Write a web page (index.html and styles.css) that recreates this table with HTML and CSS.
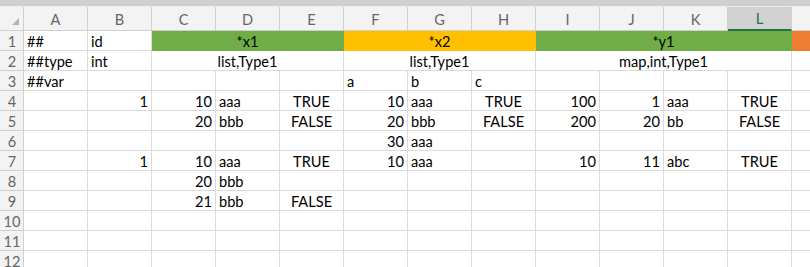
FILE: index.html
```html
<!DOCTYPE html>
<html lang="en">
<head>
    <meta charset="UTF-8">
    <meta name="viewport" content="width=device-width, initial-scale=1.0">
    <title>Book1 - Sheet1</title>
    <link rel="stylesheet" href="styles.css">
</head>
<body>
    <div class="window">
        <div class="formula-edge"></div>
        <div class="sheet" id="sheet"></div>
    </div>

    <script>
        const COLUMNS = ['A', 'B', 'C', 'D', 'E', 'F', 'G', 'H', 'I', 'J', 'K', 'L', 'M'];
        const SELECTED_COLUMN = 'L';
        const VISIBLE_ROWS = 12;

        // one entry per row, strings/numbers/booleans are plain cells,
        // objects describe merged or filled cells
        const rows = [
            ['##', 'id',
                { t: '*x1', span: 3, fill: 'green' },
                { t: '*x2', span: 3, fill: 'gold' },
                { t: '*y1', span: 4, fill: 'green' },
                { t: '', fill: 'orange' }],
            ['##type', 'int',
                { t: 'list,Type1', span: 3 },
                { t: 'list,Type1', span: 3 },
                { t: 'map,int,Type1', span: 4 },
                ''],
            ['##var', '', '', '', '', 'a', 'b', 'c', '', '', '', '', ''],
            ['', 1, 10, 'aaa', true, 10, 'aaa', true, 100, 1, 'aaa', true, ''],
            ['', '', 20, 'bbb', false, 20, 'bbb', false, 200, 20, 'bb', false, ''],
            ['', '', '', '', '', 30, 'aaa', '', '', '', '', '', ''],
            ['', 1, 10, 'aaa', true, 10, 'aaa', '', 10, 11, 'abc', true, ''],
            ['', '', 20, 'bbb', '', '', '', '', '', '', '', '', ''],
            ['', '', 21, 'bbb', false, '', '', '', '', '', '', '', '']
        ];

        function makeCell(className, text) {
            const el = document.createElement('div');
            el.className = className;
            el.textContent = text;
            return el;
        }

        function renderSheet() {
            const sheet = document.getElementById('sheet');
            sheet.innerHTML = '';

            // column headers
            const corner = makeCell('corner', '');
            corner.innerHTML = '<svg class="select-all" width="7" height="7" viewBox="0 0 7 7"><polygon points="7,0 7,7 0,7" fill="#b4b4b4"/></svg>';
            sheet.appendChild(corner);
            COLUMNS.forEach(c => {
                const head = makeCell('col-head', c === 'M' ? '' : c);
                if (c === SELECTED_COLUMN) head.classList.add('selected');
                sheet.appendChild(head);
            });

            for (let r = 0; r < VISIBLE_ROWS; r++) {
                sheet.appendChild(makeCell('row-head', String(r + 1)));
                const data = rows[r] || COLUMNS.map(() => '');

                data.forEach(value => {
                    let cell;
                    if (value !== null && typeof value === 'object') {
                        cell = makeCell('cell merged', value.t);
                        if (value.span) cell.style.gridColumn = `span ${value.span}`;
                        if (value.fill) cell.classList.add('fill-' + value.fill);
                    } else if (typeof value === 'number') {
                        cell = makeCell('cell num', value);
                    } else if (typeof value === 'boolean') {
                        cell = makeCell('cell bool', value ? 'TRUE' : 'FALSE');
                    } else {
                        cell = makeCell('cell', value);
                    }
                    sheet.appendChild(cell);
                });
            }
        }

        renderSheet();
    </script>
</body>
</html>
```

FILE: styles.css
```css
:root {
    --grid-line: #dadada;
    --head-bg: #f3f3f3;
    --head-line: #d0d0d0;
    --head-text: #666;
    --excel-green: #217346;
    --fill-green: #70ad47;
    --fill-gold: #ffc000;
    --fill-orange: #ed7d31;
}

* {
    margin: 0;
    padding: 0;
    box-sizing: border-box;
}

body {
    background: #fff;
    overflow: hidden;
    font-family: Lato, "Liberation Sans", sans-serif;
    font-size: 14.6px;
    color: #000;
}

.window {
    width: 810px;
    height: 267px;
    overflow: hidden;
}

.formula-edge {
    height: 7px;
    background: #cfcfcf;
    border-bottom: 1px solid #ececec;
}

.sheet {
    display: grid;
    grid-template-columns: 24px repeat(13, 64px);
    grid-template-rows: 24px;
    grid-auto-rows: 20px;
    width: max-content;
}

.corner,
.col-head,
.row-head {
    background: var(--head-bg);
    color: var(--head-text);
    border-right: 1px solid var(--head-line);
    border-bottom: 1px solid var(--head-line);
}

.corner {
    display: flex;
    align-items: flex-end;
    justify-content: flex-end;
    padding: 0 4px 5px 0;
}

.col-head {
    display: flex;
    align-items: center;
    justify-content: center;
    padding-top: 1px;
}

.col-head.selected {
    background: #d2d2d2;
    color: var(--excel-green);
    border-bottom: 2px solid var(--excel-green);
}

.row-head {
    text-align: center;
    line-height: 21px;
    padding-left: 1px;
}

/* excel sits text on the bottom of the row */
.cell {
    border-right: 1px solid var(--grid-line);
    border-bottom: 1px solid var(--grid-line);
    padding: 1px 3px 0;
    line-height: 19px;
    white-space: nowrap;
    overflow: hidden;
}

.cell.num {
    text-align: right;
}

.cell.bool,
.cell.merged {
    text-align: center;
}

.fill-green {
    background: var(--fill-green);
    border-color: var(--fill-green);
}

.fill-gold {
    background: var(--fill-gold);
    border-color: var(--fill-gold);
}

.fill-orange {
    background: var(--fill-orange);
    border-color: var(--fill-orange);
}
```
